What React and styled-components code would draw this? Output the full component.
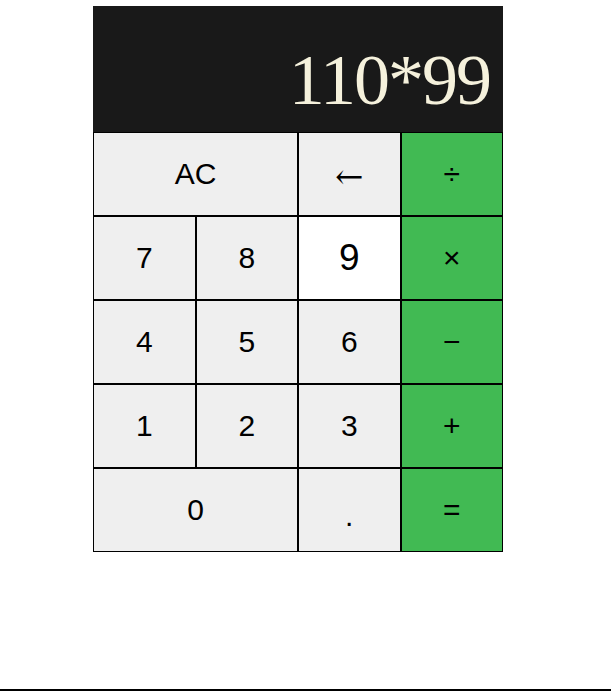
import React from 'react';
import styled, { createGlobalStyle } from 'styled-components';

const GlobalStyle = createGlobalStyle`
  body {
    margin: 0;
    font-family: "Liberation Sans", Arial, sans-serif;
    background: #fff;
  }
`;

const Page = styled.div`
  display: flex;
  flex-direction: column;
  min-height: 691px;
`;

const Calculator = styled.div`
  width: 410px;
  margin: 6px 0 0 93px;
`;

const Display = styled.div`
  height: 126px;
  background: #191919;
  display: flex;
  align-items: flex-end;
  justify-content: flex-end;
  padding: 0 13px 11px;
  box-sizing: border-box;
  color: #f5f1dc;
  font-family: "Liberation Serif", "Times New Roman", serif;
  font-size: 72px;
  line-height: 82px;
  letter-spacing: -2px;
`;

const Keys = styled.div`
  display: grid;
  grid-template-columns: repeat(4, 1fr);
  grid-auto-rows: 84px;
`;

const Key = styled.button`
  grid-column: span ${p => p.$span || 1};
  border: 1px solid #000;
  margin: 0;
  padding: 0;
  background: ${p => (p.$op ? '#41ba53' : p.$active ? '#fff' : '#efefef')};
  color: #000;
  font-family: "Liberation Sans", Arial, sans-serif;
  font-size: ${p => (p.$active ? '37px' : '30px')};
  cursor: pointer;
`;

const Arrow = styled.span`
  font-family: "DejaVu Serif", serif;
  font-size: 34px;
  position: relative;
  top: 2px;
`;

const Dot = styled.span`
  position: relative;
  top: 6px;
`;

const Footer = styled.div`
  margin-top: auto;
  height: 2px;
  background: #000;
`;

const App = () => {
  return (
    <>
      <GlobalStyle />
      <Page>
        <Calculator>
          <Display>110*99</Display>
          <Keys>
            <Key $span={2}>AC</Key>
            <Key><Arrow>←</Arrow></Key>
            <Key $op>÷</Key>
            <Key>7</Key>
            <Key>8</Key>
            <Key $active>9</Key>
            <Key $op>×</Key>
            <Key>4</Key>
            <Key>5</Key>
            <Key>6</Key>
            <Key $op>−</Key>
            <Key>1</Key>
            <Key>2</Key>
            <Key>3</Key>
            <Key $op>+</Key>
            <Key $span={2}>0</Key>
            <Key><Dot>.</Dot></Key>
            <Key $op>=</Key>
          </Keys>
        </Calculator>
        <Footer />
      </Page>
    </>
  );
};

export default App;
